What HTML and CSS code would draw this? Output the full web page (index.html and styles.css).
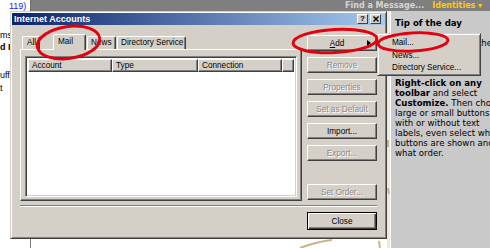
FILE: index.html
```html
<!DOCTYPE html>
<html>
	<head>
		<meta charset="utf-8">
		<title>Internet Accounts</title>
		<link rel="stylesheet" href="styles.css">
	</head>
	<body>
		<div class="page">
			<div class="top">
				<div class="top-left"><span class="link">119)</span></div>
				<div class="topbar">
					<span class="find">Find a Message...</span>
					<span class="ident">Identities ▾</span>
				</div>
			</div>
			<div class="below">
				<div class="side">
					<div class="frag f1">ms</div>
					<div class="frag f2"><b>d II</b></div>
					<div class="frag f3">uff</div>
					<div class="frag f4">t</div>
				</div>
				<div class="frame"></div>
				<div class="gap"></div>
				<div class="tip">
					<div class="tip-h">Tip of the day</div>
					<div class="tip-p">You can change the</div>
					<div class="tip-t">
						<b>Right-click on any</b><br>
						<b>toolbar</b> and select<br>
						<b>Customize.</b> Then choose<br>
						large or small buttons,<br>
						with or without text<br>
						labels, even select which<br>
						buttons are shown and in<br>
						what order.
					</div>
				</div>
			</div>
		</div>

		<!-- dialog window -->
		<div class="dialog">
			<div class="titlebar">
				<span class="title">Internet Accounts</span>
				<span class="tbtn">?</span>
				<span class="tbtn">
					<svg width="6" height="6" viewBox="0 0 6 6"><path d="M0.5 0.5L5.5 5.5M5.5 0.5L0.5 5.5" stroke="#000" stroke-width="1.4"/></svg>
				</span>
			</div>
			<div class="dlg-body">
				<div class="dlg-main">
					<div class="tabs-area">
						<div class="tabrow">
							<div class="tab t-all">All</div>
							<div class="tab t-mail on">Mail</div>
							<div class="tab t-news">News</div>
							<div class="tab t-dir">Directory Service</div>
						</div>
						<div class="tabpanel">
							<div class="list">
								<div class="lhead">
									<span class="c1">Account</span>
									<span class="c2">Type</span>
									<span class="c3">Connection</span>
									<span class="c4"></span>
								</div>
							</div>
						</div>
					</div>
					<div class="btncol">
						<div class="btn add"><span><u>A</u>dd</span><i class="arrow"></i></div>
						<div class="btn off">Remove</div>
						<div class="btn off">Properties</div>
						<div class="btn off">Set as Default</div>
						<div class="btn">Import...</div>
						<div class="btn off">Export...</div>
						<div class="btn off last">Set Order...</div>
					</div>
				</div>
				<div class="sep"></div>
				<div class="foot">
					<div class="btn close">Close</div>
				</div>
			</div>
		</div>

		<!-- popup menu of Add -->
		<div class="menu">
			<div class="mi">Mail...</div>
			<div class="mi">News...</div>
			<div class="mi">Directory Service...</div>
		</div>

		<!-- red marks drawn on the screenshot -->
		<svg class="marks" width="490" height="248" viewBox="0 0 490 248">
			<g fill="none" stroke="#e3000f" stroke-width="3">
				<ellipse cx="68.5" cy="42.5" rx="31.5" ry="16" transform="rotate(-8 68.5 42.5)"/>
				<ellipse cx="335" cy="41" rx="42" ry="11.5" transform="rotate(-3 335 41)"/>
				<ellipse cx="413" cy="42" rx="35" ry="9" transform="rotate(-3 413 42)"/>
			</g>
			<g fill="none" stroke="#c9b48a" stroke-width="2">
				<path d="M300 248 Q315 242 332 240"/>
				<path d="M379 241 L380 248"/>
				<path d="M388 140 L388 147"/>
				<path d="M388 188 L389 194"/>
			</g>
		</svg>
	</body>
</html>
```
FILE: styles.css
```css
* {
	box-sizing: border-box;
}
body {
	margin: 0;
	width: 490px;
	height: 248px;
	overflow: hidden;
	position: relative;
	background-color: #fff;
	font-family: "Liberation Sans", Arial, sans-serif;
	font-size: 8.2px;
	color: #000;
}
.page {
	display: flex;
	flex-direction: column;
	height: 248px;
}
.top {
	display: flex;
	height: 11px;
}
.top-left {
	width: 30px;
	padding-left: 9px;
	line-height: 13px;
	font-size: 9px;
	white-space: nowrap;
}
.link {
	color: #1a1aff;
}
.topbar {
	flex: 1;
	display: flex;
	align-items: center;
	gap: 8px;
	padding-left: 314px;
	background-color: #7f7f7f;
	border-left: 1px solid #6a6a6a;
	font-family: "DejaVu Sans", Verdana, sans-serif;
	font-weight: bold;
	font-size: 8px;
	white-space: nowrap;
	overflow: hidden;
}
.find {
	color: #d6d6d6;
}
.ident {
	color: #ffcc00;
}
.below {
	flex: 1;
	display: flex;
}
.side {
	width: 30px;
	overflow: hidden;
	font-size: 9px;
	line-height: 12px;
	white-space: nowrap;
}
.f1 {
	margin-top: 18px;
}
.f3 {
	margin-top: 16px;
}
.f4 {
	margin-top: 1px;
}
.frame {
	width: 357px;
	border-left: 1px solid #7a7a7a;
}
.gap {
	width: 3px;
	background-color: #efe9db;
}
.tip {
	flex: 1;
	background-color: #c9c9c9;
	border-left: 1px solid #fff;
	padding: 7px 0 0 4px;
	font-family: "DejaVu Sans", Verdana, sans-serif;
	font-size: 8.6px;
	line-height: 10px;
	white-space: nowrap;
	overflow: hidden;
}
.tip-h {
	font-weight: bold;
}
.tip-p {
	width: 97px;
	margin-top: 10px;
	text-align: right;
}
.tip-t {
	margin-top: 30px;
}

/* dialog */
.dialog {
	position: absolute;
	left: 10px;
	top: 11px;
	width: 377px;
	height: 228px;
	display: flex;
	flex-direction: column;
	padding: 1px;
	background-color: #d4d0c8;
	border: 1px solid;
	border-color: #d4d0c8 #404040 #404040 #d4d0c8;
	box-shadow: inset 1px 1px #fff, inset -1px -1px #808080;
}
.titlebar {
	height: 12px;
	display: flex;
	align-items: center;
	padding: 0 4px 0 2px;
	background: linear-gradient(to right, #0a246a, #a6caf0);
	color: #fff;
	font-weight: bold;
	font-size: 9px;
}
.title {
	flex: 1;
}
.tbtn {
	width: 11px;
	height: 10px;
	display: flex;
	align-items: center;
	justify-content: center;
	background-color: #d4d0c8;
	border: 1px solid;
	border-color: #fff #404040 #404040 #fff;
	color: #000;
	font-size: 8px;
	line-height: 1;
}
.tbtn + .tbtn {
	margin-left: 2px;
}
.dlg-body {
	flex: 1;
	display: flex;
	flex-direction: column;
	padding: 9px 8px 0 8px;
}
.dlg-main {
	display: flex;
	gap: 5px;
	height: 167px;
}
.tabs-area {
	width: 282px;
	display: flex;
	flex-direction: column;
}
.tabrow {
	height: 15px;
	display: flex;
	align-items: flex-end;
	padding-left: 2px;
	position: relative;
	z-index: 1;
}
.tab {
	height: 13px;
	padding-left: 4px;
	line-height: 12px;
	white-space: nowrap;
	border: 1px solid;
	border-bottom: none;
	border-color: #fff #404040 transparent #fff;
	border-radius: 2px 2px 0 0;
	box-shadow: inset -1px 0 #808080;
}
.tab.on {
	height: 16px;
	margin-bottom: -1px;
	line-height: 14px;
	background-color: #d4d0c8;
}
.t-all {
	width: 18px;
}
.t-mail {
	width: 33px;
	margin-left: 13px;
}
.t-news {
	width: 29px;
	margin-left: 1px;
	padding-left: 3px;
}
.t-dir {
	width: 69px;
	margin-left: 1px;
	padding-left: 3px;
}
.tabpanel {
	flex: 1;
	padding: 6px 4px 3px 4px;
	border: 1px solid;
	border-color: #fff #404040 #404040 #fff;
	box-shadow: inset -1px -1px #808080;
}
.list {
	height: 100%;
	padding: 2px;
	background-color: #fff;
	border: 1px solid;
	border-color: #808080 #fff #fff #808080;
	box-shadow: inset 1px 1px #404040, inset -1px -1px #d4d0c8;
}
.lhead {
	display: flex;
	height: 13px;
}
.lhead span {
	padding-left: 3px;
	line-height: 11px;
	background-color: #d4d0c8;
	border: 1px solid;
	border-color: #fff #404040 #404040 #fff;
	box-shadow: inset -1px -1px #808080;
}
.c1 {
	width: 84px;
}
.c2 {
	width: 86px;
}
.c3 {
	width: 84px;
}
.c4 {
	flex: 1;
}
.btncol {
	width: 70px;
	display: flex;
	flex-direction: column;
	gap: 6px;
	padding: 1px 0;
}
.btn {
	height: 16px;
	display: flex;
	align-items: center;
	justify-content: center;
	background-color: #d4d0c8;
	border: 1px solid;
	border-color: #fff #404040 #404040 #fff;
	box-shadow: inset -1px -1px #808080;
	white-space: nowrap;
}
.btn.off {
	color: #8a8a8a;
	text-shadow: 1px 1px 0 #fff;
}
.btn.last {
	margin-top: auto;
}
.add {
	position: relative;
	padding-right: 10px;
}
.arrow {
	position: absolute;
	right: 5px;
	top: 4px;
	width: 0;
	height: 0;
	border-top: 3px solid transparent;
	border-bottom: 3px solid transparent;
	border-left: 4px solid #000;
}
.sep {
	height: 2px;
	margin-top: 4px;
	border-top: 1px solid #808080;
	border-bottom: 1px solid #fff;
}
.foot {
	display: flex;
	justify-content: flex-end;
	padding-top: 5px;
}
.btn.close {
	width: 70px;
	height: 18px;
	border-color: #000;
	box-shadow: inset 1px 1px #fff, inset -1px -1px #404040, inset -2px -2px #808080;
}

/* popup menu */
.menu {
	position: absolute;
	left: 377px;
	top: 33px;
	width: 104px;
	height: 43px;
	padding: 3px 2px;
	background-color: #d4d0c8;
	border: 1px solid;
	border-color: #d4d0c8 #404040 #404040 #d4d0c8;
	box-shadow: inset 1px 1px #fff, inset -1px -1px #808080;
	z-index: 2;
}
.mi {
	height: 12.5px;
	line-height: 12.5px;
	padding-left: 12px;
	white-space: nowrap;
}
.marks {
	position: absolute;
	left: 0;
	top: 0;
	z-index: 3;
}
```
